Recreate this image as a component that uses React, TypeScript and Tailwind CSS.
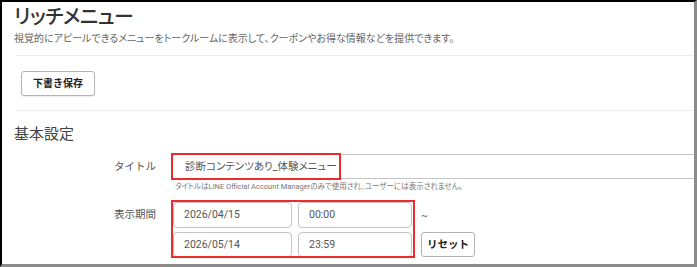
import React from "react";

const font = "font-['Roboto','Noto_Sans_CJK_JP',sans-serif]";

function Field({ value, w, h }: { value: string; w: string; h: string }) {
  return (
    <div
      className={`${w} ${h} flex shrink-0 items-center rounded-[4px] border border-[#c4c4c4] bg-white pl-[10px] text-[10.5px] text-[#555]`}
    >
      {value}
    </div>
  );
}

export default function App() {
  return (
    <div
      className={`${font} relative h-[267px] w-[697px] overflow-hidden border-t-2 border-l-2 border-r-[3px] border-b-[3px] border-t-black border-l-black border-r-[#8c8c8c] border-b-[#8c8c8c] bg-white`}
    >
      <div className="pl-[12px]">
        <h1 className="pt-[1px] text-[20px] leading-[28px] font-medium tracking-[-0.5px] text-[#333] [font-feature-settings:'palt']">
          リッチメニュー
        </h1>
        <p className="text-[10px] leading-[16px] text-[#666] [font-feature-settings:'palt']">
          視覚的にアピールできるメニューをトークルームに表示して、クーポンやお得な情報などを提供できます。
        </p>
        <div className="mt-[8px] ml-[2px] border-t border-[#ececec]" />

        <div className="mt-[14px] pl-[7px]">
          <button className="h-[25px] w-[74px] rounded-[3px] border border-[#b5b5b5] bg-white text-[10px] font-bold text-[#222] shadow-[0_1px_1px_rgba(0,0,0,0.08)]">
            下書き保存
          </button>
        </div>
        <div className="mt-[14px] ml-[2px] border-t border-[#ececec]" />

        <h2 className="mt-[12px] text-[15px] leading-[22px] text-[#444]">基本設定</h2>

        {/* タイトル */}
        <div className="mt-[9px] flex items-center">
          <div className="w-[143px] shrink-0 pr-[1px] text-right text-[10.5px] text-[#555]">タイトル</div>
          <div className="relative ml-[15px] shrink-0">
            <div className="flex h-[25px] w-[560px] items-center border border-[#c4c4c4] pl-[12px] text-[10.5px] text-[#555] [font-feature-settings:'palt']">
              診断コンテンツあり_体験メニュー
            </div>
            <div className="absolute left-[-1px] top-[-1px] h-[27px] w-[170px] border-2 border-[#ee2b2b]" />
          </div>
        </div>
        <p className="mt-[2px] ml-[161px] text-[7.5px] leading-[12px] text-[#777] [font-feature-settings:'palt']">
          タイトルはLINE Official Account Managerのみで使用され、ユーザーには表示されません。
        </p>

        {/* 表示期間 */}
        <div className="mt-[9px] flex">
          <div className="flex h-[26px] w-[143px] shrink-0 items-center justify-end pr-[1px] text-[10.5px] text-[#555]">
            表示期間
          </div>
          <div className="relative ml-[16px] flex flex-col gap-[4px]">
            <div className="flex items-center gap-[6px]">
              <Field value="2026/04/15" w="w-[119px]" h="h-[26px]" />
              <Field value="00:00" w="w-[114px]" h="h-[26px]" />
              <span className="ml-[3px] text-[10px] text-[#666]">~</span>
            </div>
            <div className="flex items-center gap-[6px]">
              <Field value="2026/05/14" w="w-[119px]" h="h-[25px]" />
              <Field value="23:59" w="w-[114px]" h="h-[25px]" />
              <button className="ml-[3px] h-[25px] w-[54px] rounded-[3px] border border-[#b5b5b5] bg-white text-[10.5px] font-bold text-[#222]">
                リセット
              </button>
            </div>
            <div className="absolute left-[-2px] top-[-2px] h-[58px] w-[244px] border-2 border-[#ee2b2b]" />
          </div>
        </div>
      </div>
    </div>
  );
}
